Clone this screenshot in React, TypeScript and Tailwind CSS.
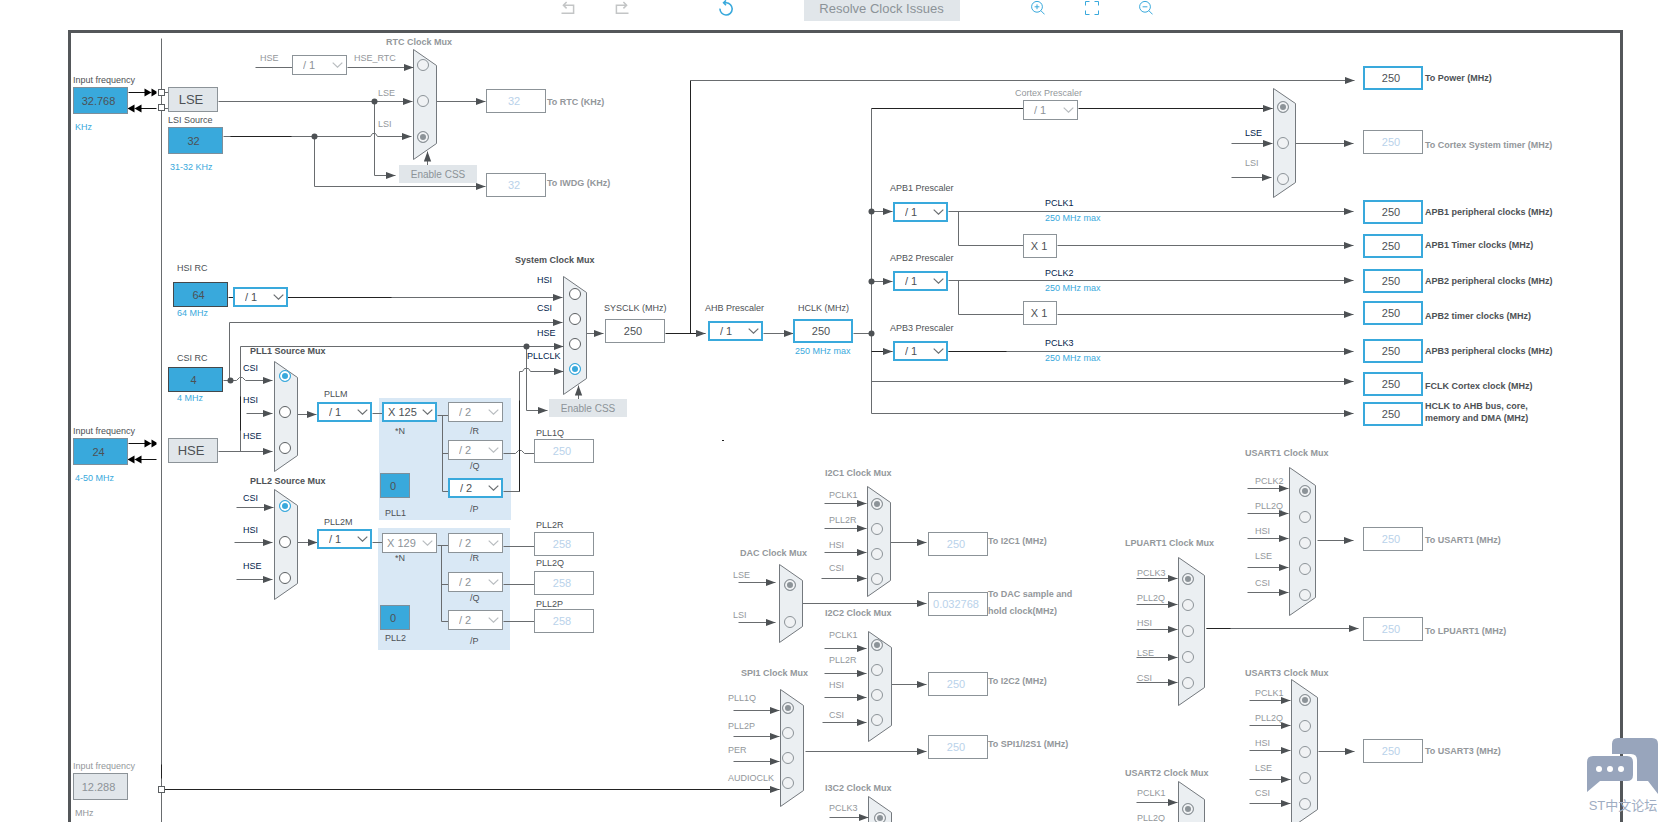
import clsx from "clsx";

type Tone = "dark" | "muted" | "navy" | "blue";

const TONES: Record<Tone, string> = {
  dark: "text-[#4d5155]",
  muted: "text-[#93979b]",
  navy: "text-[#03234b]",
  blue: "text-[#39a9dc]",
};

// x is the left edge of the text, y the middle of its first line
type LabelData = {
  text: string;
  x: number;
  y: number;
  tone?: Tone;
  bold?: boolean;
  htmlFor?: string;
  className?: string;
};

type FieldData = {
  id: string;
  value: string;
  x: number;
  y: number;
  kind: "active" | "plain" | "off" | "source" | "hsi" | "sourceOff" | "frac";
};

type PrescalerData = {
  id: string;
  value: string;
  x: number;
  y: number;
  on?: boolean;
  wide?: boolean;
  name?: string;
};

type MuxInput = {
  label?: string;
  lx: number;
  ly: number;
  ry: number;
  wire?: string;
  tone?: Tone;
};

type MuxData = {
  id: string;
  title: string;
  tx: number;
  ty: number;
  x: number;
  y: number;
  w: number;
  h: number;
  slant: number;
  rx: number;
  selected: number;
  on?: boolean;
  inputs: MuxInput[];
};

const MUXES: MuxData[] = [
  {
    id: "rtc", title: "RTC Clock Mux", tx: 386, ty: 42,
    x: 413, y: 49, w: 23, h: 110, slant: 16, rx: 423, selected: 2,
    inputs: [
      { label: "HSE_RTC", lx: 354, ly: 58, ry: 65, wire: "M347 67H413" },
      { label: "LSE", lx: 378, ly: 93, ry: 101, wire: "M218 101H412" },
      { label: "LSI", lx: 378, ly: 124, ry: 137, wire: "M223 136H370l2 -3h3l2 3H411" },
    ],
  },
  {
    id: "system", title: "System Clock Mux", tx: 515, ty: 260,
    x: 563, y: 276, w: 23, h: 118, slant: 16, rx: 575, selected: 3, on: true,
    inputs: [
      { label: "HSI", lx: 537, ly: 280, ry: 294, wire: "M288 297H562" },
      { label: "CSI", lx: 537, ly: 308, ry: 319, wire: "M229 380V322H562" },
      { label: "HSE", lx: 537, ly: 333, ry: 344, wire: "M240 451V346H563" },
      { label: "PLLCLK", lx: 527, ly: 356, ry: 369, wire: "M503 491H519V371H522l2 -3h4l2 3H563" },
    ],
  },
  {
    id: "pll1", title: "PLL1 Source Mux", tx: 250, ty: 351,
    x: 274, y: 361, w: 23, h: 110, slant: 16, rx: 285, selected: 0, on: true,
    inputs: [
      { label: "CSI", lx: 243, ly: 368, ry: 376, wire: "M223 380H236l3 -3h3l3 3H272" },
      { label: "HSI", lx: 243, ly: 400, ry: 412, wire: "M246 413H272" },
      { label: "HSE", lx: 243, ly: 436, ry: 448, wire: "M218 451H272" },
    ],
  },
  {
    id: "pll2", title: "PLL2 Source Mux", tx: 250, ty: 481,
    x: 274, y: 489, w: 23, h: 110, slant: 16, rx: 285, selected: 0, on: true,
    inputs: [
      { label: "CSI", lx: 243, ly: 498, ry: 506, wire: "M236 507H273" },
      { label: "HSI", lx: 243, ly: 530, ry: 542, wire: "M234 542H272" },
      { label: "HSE", lx: 243, ly: 566, ry: 578, wire: "M236 579H272" },
    ],
  },
  {
    id: "cortex", title: "", tx: 0, ty: 0,
    x: 1273, y: 88, w: 22, h: 109, slant: 15, rx: 1283, selected: 0,
    inputs: [
      { lx: 0, ly: 0, ry: 107 },
      { label: "LSE", lx: 1245, ly: 133, ry: 143, wire: "M1231 143H1272", tone: "navy" },
      { label: "LSI", lx: 1245, ly: 163, ry: 179, wire: "M1231 177H1271" },
    ],
  },
  {
    id: "i2c1", title: "I2C1 Clock Mux", tx: 825, ty: 473,
    x: 867, y: 486, w: 23, h: 110, slant: 16, rx: 877, selected: 0,
    inputs: [
      { label: "PCLK1", lx: 829, ly: 495, ry: 504, wire: "M824 503H866" },
      { label: "PLL2R", lx: 829, ly: 520, ry: 529, wire: "M824 528H866" },
      { label: "HSI", lx: 829, ly: 545, ry: 554, wire: "M824 552H866" },
      { label: "CSI", lx: 829, ly: 568, ry: 579, wire: "M821 578H866" },
    ],
  },
  {
    id: "dac", title: "DAC Clock Mux", tx: 740, ty: 553,
    x: 779, y: 564, w: 23, h: 78, slant: 16, rx: 790, selected: 0,
    inputs: [
      { label: "LSE", lx: 733, ly: 575, ry: 585, wire: "M738 582H775" },
      { label: "LSI", lx: 733, ly: 615, ry: 622, wire: "M738 622H775" },
    ],
  },
  {
    id: "i2c2", title: "I2C2 Clock Mux", tx: 825, ty: 613,
    x: 868, y: 631, w: 23, h: 110, slant: 16, rx: 877, selected: 0,
    inputs: [
      { label: "PCLK1", lx: 829, ly: 635, ry: 645, wire: "M824 648H866" },
      { label: "PLL2R", lx: 829, ly: 660, ry: 670, wire: "M824 673H866" },
      { label: "HSI", lx: 829, ly: 685, ry: 695, wire: "M824 697H866" },
      { label: "CSI", lx: 829, ly: 715, ry: 720, wire: "M822 722H866" },
    ],
  },
  {
    id: "spi1", title: "SPI1 Clock Mux", tx: 741, ty: 673,
    x: 780, y: 689, w: 23, h: 117, slant: 16, rx: 788, selected: 0,
    inputs: [
      { label: "PLL1Q", lx: 728, ly: 698, ry: 708, wire: "M733 710H779" },
      { label: "PLL2P", lx: 728, ly: 726, ry: 733, wire: "M733 736H779" },
      { label: "PER", lx: 728, ly: 750, ry: 758, wire: "M733 761H779" },
      { label: "AUDIOCLK", lx: 728, ly: 778, ry: 783 },
    ],
  },
  {
    id: "i3c2", title: "I3C2 Clock Mux", tx: 825, ty: 788,
    x: 868, y: 796, w: 23, h: 110, slant: 16, rx: 880, selected: 0,
    inputs: [{ label: "PCLK3", lx: 829, ly: 808, ry: 818, wire: "M829 817H868" }],
  },
  {
    id: "usart1", title: "USART1 Clock Mux", tx: 1245, ty: 453,
    x: 1289, y: 467, w: 26, h: 148, slant: 18, rx: 1305, selected: 0,
    inputs: [
      { label: "PCLK2", lx: 1255, ly: 481, ry: 491, wire: "M1247 488H1288" },
      { label: "PLL2Q", lx: 1255, ly: 506, ry: 517, wire: "M1247 513H1288" },
      { label: "HSI", lx: 1255, ly: 531, ry: 543, wire: "M1247 538H1288" },
      { label: "LSE", lx: 1255, ly: 556, ry: 569, wire: "M1247 567H1288" },
      { label: "CSI", lx: 1255, ly: 583, ry: 595, wire: "M1247 592H1288" },
    ],
  },
  {
    id: "lpuart1", title: "LPUART1 Clock Mux", tx: 1125, ty: 543,
    x: 1178, y: 557, w: 26, h: 148, slant: 18, rx: 1188, selected: 0,
    inputs: [
      { label: "PCLK3", lx: 1137, ly: 573, ry: 579, wire: "M1136 578H1177" },
      { label: "PLL2Q", lx: 1137, ly: 598, ry: 605, wire: "M1136 604H1177" },
      { label: "HSI", lx: 1137, ly: 623, ry: 631, wire: "M1136 629H1177" },
      { label: "LSE", lx: 1137, ly: 653, ry: 657, wire: "M1136 657H1177" },
      { label: "CSI", lx: 1137, ly: 678, ry: 683, wire: "M1136 682H1177" },
    ],
  },
  {
    id: "usart3", title: "USART3 Clock Mux", tx: 1245, ty: 673,
    x: 1291, y: 679, w: 26, h: 148, slant: 18, rx: 1305, selected: 0,
    inputs: [
      { label: "PCLK1", lx: 1255, ly: 693, ry: 700, wire: "M1249 700H1290" },
      { label: "PLL2Q", lx: 1255, ly: 718, ry: 726, wire: "M1249 725H1290" },
      { label: "HSI", lx: 1255, ly: 743, ry: 752, wire: "M1249 750H1290" },
      { label: "LSE", lx: 1255, ly: 768, ry: 778, wire: "M1249 779H1290" },
      { label: "CSI", lx: 1255, ly: 793, ry: 804, wire: "M1249 803H1290" },
    ],
  },
  {
    id: "usart2", title: "USART2 Clock Mux", tx: 1125, ty: 773,
    x: 1178, y: 781, w: 26, h: 148, slant: 18, rx: 1188, selected: 0,
    inputs: [
      { label: "PCLK1", lx: 1137, ly: 793, ry: 809, wire: "M1136 802H1177" },
      { label: "PLL2Q", lx: 1137, ly: 818, ry: 835, wire: "M1136 828H1177" },
    ],
  },
];

const FIELDS: FieldData[] = [
  { id: "lse-in", value: "32.768", x: 73, y: 87, kind: "source" },
  { id: "lsi-src", value: "32", x: 168, y: 127, kind: "source" },
  { id: "hsi-src", value: "64", x: 173, y: 282, kind: "hsi" },
  { id: "csi-src", value: "4", x: 168, y: 367, kind: "hsi" },
  { id: "hse-in", value: "24", x: 73, y: 438, kind: "source" },
  { id: "audio-in", value: "12.288", x: 73, y: 773, kind: "sourceOff" },
  { id: "pll1-frac", value: "0", x: 380, y: 473, kind: "frac" },
  { id: "pll2-frac", value: "0", x: 380, y: 605, kind: "frac" },
  { id: "rtc-out", value: "32", x: 486, y: 89, kind: "off" },
  { id: "iwdg-out", value: "32", x: 486, y: 173, kind: "off" },
  { id: "sysclk", value: "250", x: 605, y: 319, kind: "plain" },
  { id: "hclk", value: "250", x: 793, y: 319, kind: "active" },
  { id: "pll1q", value: "250", x: 534, y: 439, kind: "off" },
  { id: "pll2r", value: "258", x: 534, y: 532, kind: "off" },
  { id: "pll2q", value: "258", x: 534, y: 571, kind: "off" },
  { id: "pll2p", value: "258", x: 534, y: 609, kind: "off" },
  { id: "power-out", value: "250", x: 1363, y: 66, kind: "active" },
  { id: "systick-out", value: "250", x: 1363, y: 130, kind: "off" },
  { id: "apb1-out", value: "250", x: 1363, y: 200, kind: "active" },
  { id: "apb1t-out", value: "250", x: 1363, y: 234, kind: "active" },
  { id: "apb2-out", value: "250", x: 1363, y: 269, kind: "active" },
  { id: "apb2t-out", value: "250", x: 1363, y: 301, kind: "active" },
  { id: "apb3-out", value: "250", x: 1363, y: 339, kind: "active" },
  { id: "fclk-out", value: "250", x: 1363, y: 372, kind: "active" },
  { id: "ahb-out", value: "250", x: 1363, y: 402, kind: "active" },
  { id: "i2c1-out", value: "250", x: 928, y: 532, kind: "off" },
  { id: "dac-out", value: "0.032768", x: 928, y: 592, kind: "off" },
  { id: "i2c2-out", value: "250", x: 928, y: 672, kind: "off" },
  { id: "spi1-out", value: "250", x: 928, y: 735, kind: "off" },
  { id: "usart1-out", value: "250", x: 1363, y: 527, kind: "off" },
  { id: "lpuart1-out", value: "250", x: 1363, y: 617, kind: "off" },
  { id: "usart3-out", value: "250", x: 1363, y: 739, kind: "off" },
];

const LABELS: LabelData[] = [
  { text: "Input frequency", x: 73, y: 80, htmlFor: "lse-in" },
  { text: "KHz", x: 75, y: 127, tone: "blue" },
  { text: "LSI Source", x: 168, y: 120, htmlFor: "lsi-src" },
  { text: "31-32 KHz", x: 170, y: 167, tone: "blue" },
  { text: "HSE", x: 260, y: 58, tone: "muted" },
  { text: "HSI RC", x: 177, y: 268, htmlFor: "hsi-src" },
  { text: "64 MHz", x: 177, y: 313, tone: "blue" },
  { text: "CSI RC", x: 177, y: 358, htmlFor: "csi-src" },
  { text: "4 MHz", x: 177, y: 398, tone: "blue" },
  { text: "Input frequency", x: 73, y: 431, htmlFor: "hse-in" },
  { text: "4-50 MHz", x: 75, y: 478, tone: "blue" },
  { text: "Input frequency", x: 73, y: 766, tone: "muted", htmlFor: "audio-in" },
  { text: "MHz", x: 75, y: 813, tone: "muted" },
  { text: "PLLM", x: 324, y: 394, htmlFor: "pllm" },
  { text: "PLL2M", x: 324, y: 522, htmlFor: "pll2m" },
  { text: "*N", x: 395, y: 431, htmlFor: "pll1-n" },
  { text: "/R", x: 470, y: 431, htmlFor: "pll1-r" },
  { text: "/Q", x: 470, y: 466, htmlFor: "pll1-q" },
  { text: "/P", x: 470, y: 509, htmlFor: "pll1-p" },
  { text: "PLL1", x: 385, y: 513, htmlFor: "pll1-frac" },
  { text: "*N", x: 395, y: 558, htmlFor: "pll2-n" },
  { text: "/R", x: 470, y: 558, htmlFor: "pll2-r" },
  { text: "/Q", x: 470, y: 598, htmlFor: "pll2-q" },
  { text: "/P", x: 470, y: 641, htmlFor: "pll2-p" },
  { text: "PLL2", x: 385, y: 638, htmlFor: "pll2-frac" },
  { text: "PLL1Q", x: 536, y: 433, htmlFor: "pll1q" },
  { text: "PLL2R", x: 536, y: 525, htmlFor: "pll2r" },
  { text: "PLL2Q", x: 536, y: 563, htmlFor: "pll2q" },
  { text: "PLL2P", x: 536, y: 604, htmlFor: "pll2p" },
  { text: "SYSCLK (MHz)", x: 604, y: 308, htmlFor: "sysclk" },
  { text: "AHB Prescaler", x: 705, y: 308, htmlFor: "ahb-pre" },
  { text: "HCLK (MHz)", x: 798, y: 308, htmlFor: "hclk" },
  { text: "250 MHz max", x: 795, y: 351, tone: "blue" },
  { text: "Cortex Prescaler", x: 1015, y: 93, tone: "muted", htmlFor: "cortex-pre" },
  { text: "APB1 Prescaler", x: 890, y: 188, htmlFor: "apb1-pre" },
  { text: "APB2 Prescaler", x: 890, y: 258, htmlFor: "apb2-pre" },
  { text: "APB3 Prescaler", x: 890, y: 328, htmlFor: "apb3-pre" },
  { text: "PCLK1", x: 1045, y: 203, tone: "navy" },
  { text: "250 MHz max", x: 1045, y: 218, tone: "blue" },
  { text: "PCLK2", x: 1045, y: 273, tone: "navy" },
  { text: "250 MHz max", x: 1045, y: 288, tone: "blue" },
  { text: "PCLK3", x: 1045, y: 343, tone: "navy" },
  { text: "250 MHz max", x: 1045, y: 358, tone: "blue" },
  { text: "To RTC (KHz)", x: 547, y: 102, tone: "muted", bold: true, htmlFor: "rtc-out" },
  { text: "To IWDG (KHz)", x: 547, y: 183, tone: "muted", bold: true, htmlFor: "iwdg-out" },
  { text: "To Power (MHz)", x: 1425, y: 78, bold: true, htmlFor: "power-out" },
  { text: "To Cortex System timer (MHz)", x: 1425, y: 145, tone: "muted", bold: true, htmlFor: "systick-out" },
  { text: "APB1 peripheral clocks (MHz)", x: 1425, y: 212, bold: true, htmlFor: "apb1-out" },
  { text: "APB1 Timer clocks (MHz)", x: 1425, y: 245, bold: true, htmlFor: "apb1t-out" },
  { text: "APB2 peripheral clocks (MHz)", x: 1425, y: 281, bold: true, htmlFor: "apb2-out" },
  { text: "APB2 timer clocks (MHz)", x: 1425, y: 316, bold: true, htmlFor: "apb2t-out" },
  { text: "APB3 peripheral clocks (MHz)", x: 1425, y: 351, bold: true, htmlFor: "apb3-out" },
  { text: "FCLK Cortex clock (MHz)", x: 1425, y: 386, bold: true, htmlFor: "fclk-out" },
  { text: "HCLK to AHB bus, core,\nmemory and DMA (MHz)", x: 1425, y: 406, bold: true, htmlFor: "ahb-out" },
  { text: "To I2C1 (MHz)", x: 988, y: 541, tone: "muted", bold: true, htmlFor: "i2c1-out" },
  { text: "To DAC sample and\nhold clock(MHz)", x: 988, y: 592, tone: "muted", bold: true, htmlFor: "dac-out", className: "leading-[17px]" },
  { text: "To I2C2 (MHz)", x: 988, y: 681, tone: "muted", bold: true, htmlFor: "i2c2-out" },
  { text: "To SPI1/I2S1 (MHz)", x: 988, y: 744, tone: "muted", bold: true, htmlFor: "spi1-out" },
  { text: "To USART1 (MHz)", x: 1425, y: 540, tone: "muted", bold: true, htmlFor: "usart1-out" },
  { text: "To LPUART1 (MHz)", x: 1425, y: 631, tone: "muted", bold: true, htmlFor: "lpuart1-out" },
  { text: "To USART3 (MHz)", x: 1425, y: 751, tone: "muted", bold: true, htmlFor: "usart3-out" },
];

const PRESCALERS: PrescalerData[] = [
  { id: "hse-rtc", value: "/ 1", x: 292, y: 55, name: "HSE RTC divider" },
  { id: "hsi-div", value: "/ 1", x: 233, y: 287, on: true, name: "HSI divider" },
  { id: "pllm", value: "/ 1", x: 317, y: 402, on: true },
  { id: "pll1-n", value: "X 125", x: 382, y: 402, on: true, wide: true },
  { id: "pll1-r", value: "/ 2", x: 448, y: 402 },
  { id: "pll1-q", value: "/ 2", x: 448, y: 440 },
  { id: "pll1-p", value: "/ 2", x: 448, y: 478, on: true },
  { id: "pll2m", value: "/ 1", x: 317, y: 529, on: true },
  { id: "pll2-n", value: "X 129", x: 382, y: 533, wide: true },
  { id: "pll2-r", value: "/ 2", x: 448, y: 533 },
  { id: "pll2-q", value: "/ 2", x: 448, y: 572 },
  { id: "pll2-p", value: "/ 2", x: 448, y: 610 },
  { id: "ahb-pre", value: "/ 1", x: 708, y: 321, on: true },
  { id: "cortex-pre", value: "/ 1", x: 1023, y: 100 },
  { id: "apb1-pre", value: "/ 1", x: 893, y: 202, on: true },
  { id: "apb2-pre", value: "/ 1", x: 893, y: 271, on: true },
  { id: "apb3-pre", value: "/ 1", x: 893, y: 341, on: true },
];

// Wires that end in an arrow head
const ARROWS = [
  "M374 101V175H395",
  "M314 136V186H485",
  "M436 101H485",
  "M427 165V151",
  "M586 333H603",
  "M578 399V385",
  "M526 346V410H547",
  "M297 414H316",
  "M297 542H317",
  "M763 333H793",
  "M871 211H892",
  "M871 281H892",
  "M948 211H1353",
  "M1057 245H1353",
  "M948 280H1353",
  "M1057 314H1353",
  "M948 351H1353",
  "M871 381H1353",
  "M871 413H1353",
  "M690 80H1354",
  "M1295 143H1353",
  "M890 542H926",
  "M802 603H926",
  "M891 684H926",
  "M805 751H926",
  "M1317 540H1353",
  "M1206 628H1358",
  "M1318 751H1354",
];

const WIRES = [
  "M161 38V822",
  "M255 67H292",
  "M163 92H168",
  "M163 108H168",
  "M372 413H382",
  "M437 415H448M442 415V491H448M442 453H448",
  "M503 453H515l3 -3h3l3 3H534",
  "M372 542H382",
  "M437 545H448M441 545V621H448M441 584H448",
  "M503 546H534M503 584H534M503 621H534",
  "M853 333H871",
  "M871 108V413",
  "M958 211V245H1023",
  "M958 280V314H1023",
];

const DARK_ARROWS = ["M665 333H705", "M871 351H892", "M1078 108H1272", "M161 789H779"];
const DARK_WIRES = [
  "M690 333V80",
  "M871 108H1023",
  "M228 297H391",
  "M948 351H1006",
  "M230 136H291",
  "M519 491V400",
  "M240 430V396",
  "M1206 628H1230",
  "M161 764V778",
];

const DOTS = [
  [374, 101],
  [314, 136],
  [230, 380],
  [526, 346],
  [871, 211],
  [871, 281],
  [871, 333],
];

const FIELD_STYLES: Record<FieldData["kind"], string> = {
  active: "w-[60px] h-6 border-2 border-[#39a9dc] bg-white pr-1 text-[#4d5155]",
  plain: "w-[60px] h-6 border border-[#8c9398] bg-white pr-1 text-[#4d5155]",
  off: "w-[60px] h-6 border border-[#8c9398] bg-white pr-1 text-[#b9d2ea]",
  source: "w-[55px] h-[27px] border border-[#7d8f9b] bg-[#39a9dc] pr-1 text-[#4d5155]",
  hsi: "w-[55px] h-[25px] border border-[#44484b] bg-[#39a9dc] pr-1 text-[#4d5155]",
  sourceOff: "w-[55px] h-[27px] border border-[#8c9398] bg-[#e1e6ea] pr-1 text-[#8c9398]",
  frac: "w-[30px] h-[25px] border border-[#7d8f9b] bg-[#39a9dc] pr-1 text-[#4d5155]",
};

function Label({ text, x, y, tone = "dark", bold, htmlFor, className = "leading-[12px]" }: LabelData) {
  const Tag = htmlFor ? "label" : "span";
  return (
    <Tag
      htmlFor={htmlFor}
      className={clsx("absolute whitespace-pre text-[9px]", TONES[tone], bold && "font-bold", className)}
      style={{ left: x, top: y - 6 }}
    >
      {text}
    </Tag>
  );
}

function Field({ id, value, x, y, kind }: FieldData) {
  return (
    <input
      id={id}
      type="text"
      defaultValue={value}
      readOnly={kind === "off" || kind === "sourceOff"}
      className={clsx("absolute text-center text-[11px] outline-none", FIELD_STYLES[kind])}
      style={{ left: x, top: y }}
    />
  );
}

function Prescaler({ id, value, x, y, on, wide, name }: PrescalerData) {
  return (
    <div className="absolute h-5 w-[55px]" style={{ left: x, top: y }}>
      <select
        id={id}
        aria-label={name}
        disabled={!on}
        defaultValue={value}
        className={clsx(
          "block size-full appearance-none bg-white pt-px pr-0 pb-0 text-[11px] leading-none opacity-100 outline-none",
          wide ? "pl-1" : "pl-[10px]",
          on ? "border-2 border-[#39a9dc] text-[#4d5155]" : "border border-[#8c9398] text-[#8c9398]",
        )}
      >
        <option>{value}</option>
      </select>
      <svg
        className={clsx("pointer-events-none absolute top-[7px] right-1", on ? "text-[#6b6f72]" : "text-[#b9bdc0]")}
        width="11"
        height="6"
        viewBox="0 0 11 6"
        fill="none"
        stroke="currentColor"
        strokeWidth="1.2"
      >
        <path d="M.7 .6 5.5 5.2 10.3 .6" />
      </svg>
    </div>
  );
}

function MuxShape({ x, y, w, h, slant }: MuxData) {
  return (
    <polygon
      points={`${x},${y} ${x + w},${y + slant} ${x + w},${y + h - slant} ${x},${y + h}`}
      fill="#ebeff2"
      stroke="#74797e"
    />
  );
}

function MuxControls({ id, title, tx, ty, rx, selected, on, inputs }: MuxData) {
  return (
    <div role="radiogroup" aria-label={title || "Cortex Clock Mux"}>
      {title && <Label text={title} x={tx} y={ty} tone={on ? "dark" : "muted"} bold />}
      {inputs.map((input, i) => (
        <div key={i}>
          {input.label && (
            <Label
              text={input.label}
              x={input.lx}
              y={input.ly}
              tone={input.tone ?? (on ? "navy" : "muted")}
              htmlFor={`${id}-${i}`}
            />
          )}
          <input
            id={`${id}-${i}`}
            type="radio"
            name={id}
            aria-label={input.label ? undefined : "HCLK"}
            defaultChecked={i === selected}
            className={clsx(
              "absolute size-3 appearance-none rounded-full border",
              on
                ? "border-[#5b5f62] bg-white checked:border-[#39a9dc] checked:bg-[#39a9dc] checked:shadow-[inset_0_0_0_2px_#fff]"
                : "border-[#8c9398] bg-[#f0f2f4] checked:bg-[#8c9398] checked:shadow-[inset_0_0_0_2px_#f0f2f4]",
            )}
            style={{ left: rx - 6, top: input.ry - 6 }}
          />
        </div>
      ))}
    </div>
  );
}

function ExternalPins({ y }: { y: number }) {
  return (
    <g stroke="#111" fill="#000">
      <path d={`M128 ${y}H150M136 ${y + 16}H156`} fill="none" />
      <path
        stroke="none"
        d={`M144 ${y - 4}l7 4l-7 4zM151 ${y - 4}l5 3v2l-5 3zM134 ${y + 12}l-7 4l7 4zM141 ${y + 12}l-7 4l7 4z`}
      />
    </g>
  );
}

function Wiring() {
  return (
    <svg className="pointer-events-none absolute inset-0 size-full">
      <defs>
        <marker id="head" markerUnits="userSpaceOnUse" markerWidth="10" markerHeight="8" refX="10" refY="4" orient="auto">
          <path d="M0 .3 10 4 0 7.7z" fill="#4d5154" />
        </marker>
      </defs>
      <rect x="379" y="398" width="132" height="122" fill="#d9e8f5" />
      <rect x="378" y="528" width="132" height="122" fill="#d9e8f5" />
      <g transform="translate(.5 .5)" fill="none">
        <g stroke="#696c6f">
          {WIRES.map((d) => (
            <path key={d} d={d} />
          ))}
          {ARROWS.map((d) => (
            <path key={d} d={d} markerEnd="url(#head)" />
          ))}
        </g>
        {MUXES.map((mux) => (
          <MuxShape key={mux.id} {...mux} />
        ))}
        <g stroke="#696c6f">
          {MUXES.flatMap((mux) => mux.inputs).map(
            (input) => input.wire && <path key={input.wire} d={input.wire} markerEnd="url(#head)" />,
          )}
        </g>
        <g stroke="#222">
          {DARK_WIRES.map((d) => (
            <path key={d} d={d} />
          ))}
          {DARK_ARROWS.map((d) => (
            <path key={d} d={d} markerEnd="url(#head)" />
          ))}
        </g>
        {DOTS.map(([x, y]) => (
          <circle key={`${x}-${y}`} cx={x} cy={y} r="3" fill="#4d5154" />
        ))}
        <ExternalPins y={92} />
        <ExternalPins y={443} />
        <g fill="#fff" stroke="#5b5f62">
          <rect x="158" y="89" width="6" height="6" />
          <rect x="158" y="104" width="6" height="6" />
          <rect x="158" y="786" width="6" height="6" />
        </g>
      </g>
      <rect x="722" y="440" width="2" height="1" fill="#222" />
    </svg>
  );
}

function OscButton({ name, className }: { name: string; className: string }) {
  return (
    <button
      type="button"
      className={clsx(
        "absolute left-[168px] h-[25px] w-[50px] border border-[#8c9398] bg-[#e1e6ea] pr-1 text-[13px] leading-none text-[#4d5155]",
        className,
      )}
    >
      {name}
    </button>
  );
}

function CssButton({ className }: { className: string }) {
  return (
    <button
      type="button"
      className={clsx("absolute h-[18px] w-[78px] bg-[#e1e6ea] pt-[2px] text-[10px] leading-none text-[#8c9398]", className)}
    >
      Enable CSS
    </button>
  );
}

function Toolbar() {
  return (
    <header className="flex h-[30px] shrink-0 items-start justify-center pl-[46px]">
      <button type="button" aria-label="Undo" className="text-[#c3c5c6]">
        <svg width="14" height="16" viewBox="0 0 14 16" fill="none" stroke="currentColor" strokeWidth="1.5">
          <path d="M.5 13.2H12.6V5.2H3M5.6 2 2.4 5.2 5.6 8.4" />
        </svg>
      </button>
      <button type="button" aria-label="Redo" className="ml-10 text-[#c3c5c6]">
        <svg width="14" height="16" viewBox="0 0 14 16" fill="none" stroke="currentColor" strokeWidth="1.5">
          <path d="M13.5 13.2H1.4V5.2H11M8.4 2 11.6 5.2 8.4 8.4" />
        </svg>
      </button>
      <button type="button" aria-label="Reset" className="ml-[90px] text-[#39a9dc]">
        <svg width="14" height="17" viewBox="0 0 14 17" fill="none" stroke="currentColor" strokeWidth="1.6">
          <path d="M1 8.6A6.1 6.1 0 1 0 7.2 2.8H4.6M7 .4 4.6 2.8 7 5.2" />
        </svg>
      </button>
      <button
        type="button"
        className="-mt-1 ml-[71px] h-[25px] w-[156px] bg-[#e1e6ea] text-[13px] leading-none text-[#8c9398]"
      >
        Resolve Clock Issues
      </button>
      <button type="button" aria-label="Zoom in" className="ml-[71px] text-[#39a9dc]">
        <svg width="14" height="16" viewBox="0 0 14 16" fill="none" stroke="currentColor">
          <circle cx="6" cy="6.8" r="5.4" />
          <path d="M9.8 10.6 13.6 14.4M3.6 6.8h4.8M6 4.4v4.8" />
        </svg>
      </button>
      <button type="button" aria-label="Fit to screen" className="ml-10 text-[#39a9dc]">
        <svg width="14" height="16" viewBox="0 0 14 16" fill="none" stroke="currentColor">
          <path d="M.5 5.5v-4h4M9.5 1.5h4v4M13.5 10.5v4h-4M4.5 14.5h-4v-4" />
        </svg>
      </button>
      <button type="button" aria-label="Zoom out" className="ml-10 text-[#39a9dc]">
        <svg width="14" height="16" viewBox="0 0 14 16" fill="none" stroke="currentColor">
          <circle cx="6" cy="6.8" r="5.4" />
          <path d="M9.8 10.6 13.6 14.4M3.6 6.8h4.8" />
        </svg>
      </button>
    </header>
  );
}

function Watermark() {
  return (
    <div className="absolute right-2 bottom-1 flex flex-col items-center text-[13px] leading-6 text-[#9fadc3]">
      <svg width="72" height="56" viewBox="0 0 72 56">
        <path d="M31 0h34q6 0 6 6v50l-10-13H50V22q0-6-6-6H25V6q0-6 6-6z" fill="#98a5bc" />
        <path d="M6 18h34q6 0 6 6v13q0 6-6 6H13L0 54V24q0-6 6-6z" fill="#98a5bc" />
        <g fill="#fff">
          <circle cx="12" cy="31" r="3" />
          <circle cx="23" cy="31" r="3" />
          <circle cx="34" cy="31" r="3" />
        </g>
      </svg>
      <span>ST中文论坛</span>
    </div>
  );
}

export default function App() {
  return (
    <div className="relative flex h-screen flex-col overflow-hidden bg-white font-['Liberation_Sans','Noto_Sans_CJK_SC',sans-serif]">
      <Toolbar />
      <main className="mr-[44px] ml-[68px] flex-1 border-[3px] border-b-0 border-[#54575a]">
        <Wiring />
        <OscButton name="LSE" className="top-[87px]" />
        <OscButton name="HSE" className="top-[438px]" />
        <CssButton className="top-[165px] left-[399px]" />
        <CssButton className="top-[399px] left-[549px]" />
        {FIELDS.map((field) => (
          <Field key={field.id} {...field} />
        ))}
        {PRESCALERS.map((prescaler) => (
          <Prescaler key={prescaler.id} {...prescaler} />
        ))}
        {[234, 301].map((top) => (
          <output
            key={top}
            className="absolute h-6 w-[34px] border border-[#8c9398] bg-white pr-[2px] text-center text-[11px] leading-[23px] text-[#4d5155]"
            style={{ left: 1023, top }}
          >
            X 1
          </output>
        ))}
        {MUXES.map((mux) => (
          <MuxControls key={mux.id} {...mux} />
        ))}
        {LABELS.map((label) => (
          <Label key={`${label.text}-${label.x}-${label.y}`} {...label} />
        ))}
      </main>
      <Watermark />
    </div>
  );
}
